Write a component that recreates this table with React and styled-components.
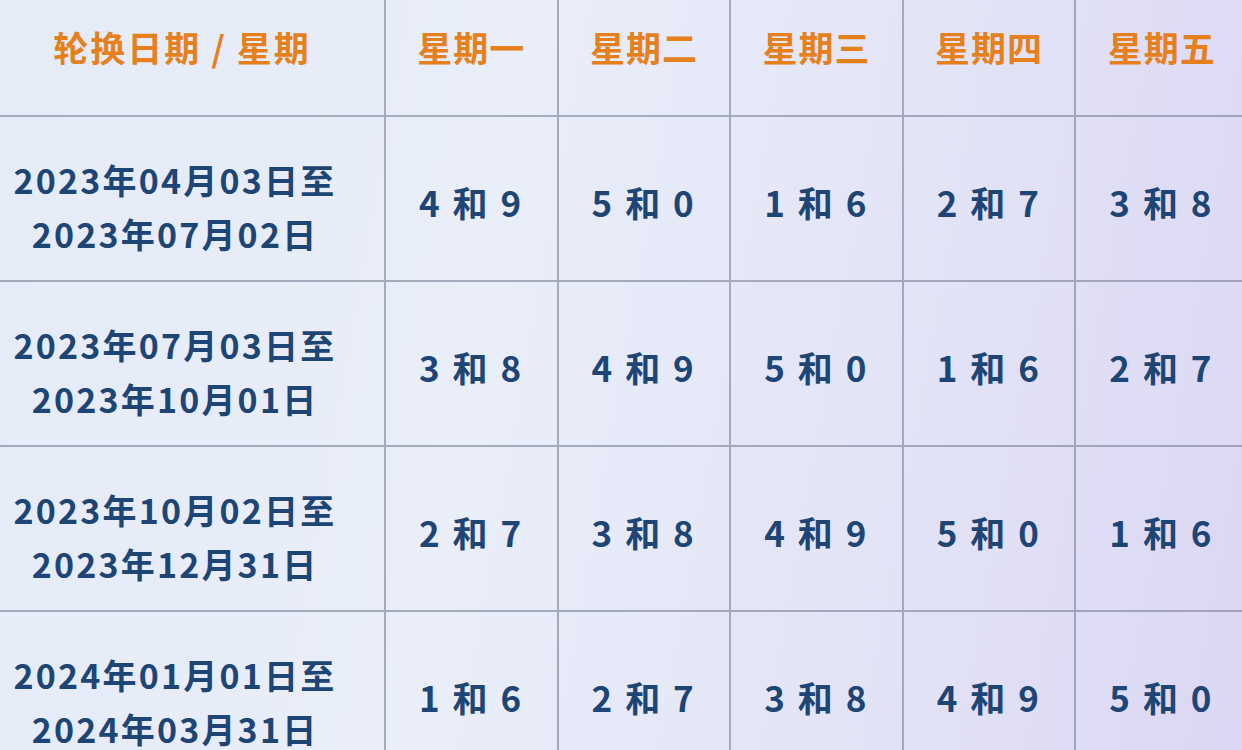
import React from "react";
import styled, { createGlobalStyle } from "styled-components";

const GlobalStyle = createGlobalStyle`
	html, body {
		margin: 0;
		padding: 0;
		overflow: hidden;
	}
	body {
		font-family: "Noto Sans CJK SC", "Noto Sans", sans-serif;
	}
`;

const Page = styled.div`
	width: 1242px;
	height: 750px;
	overflow: hidden;
	background: linear-gradient(100deg, #e5ebf7 0%, #e9eef9 40%, #e2e2f6 75%, #dcd7f4 100%);
`;

const Table = styled.div`
	display: grid;
	grid-template-columns: 386px repeat(5, 172.6px);
	grid-template-rows: 117px repeat(4, 165px);
	width: 1250px;
`;

const Cell = styled.div`
	display: flex;
	flex-direction: column;
	align-items: center;
	justify-content: ${(p) => (p.$head ? "flex-start" : "center")};
	padding-top: ${(p) => (p.$head ? "27px" : "0")};
	padding-right: ${(p) => (p.$first ? (p.$head ? "20px" : "34px") : "0")};
	box-sizing: border-box;
	border-right: 2px solid rgba(120, 126, 148, 0.6);
	border-bottom: 2px solid rgba(120, 126, 148, 0.6);
	font-weight: 700;
	color: ${(p) => (p.$head ? "#e5801c" : "#1d4575")};
	font-size: 35px;
	line-height: 40px;
	letter-spacing: ${(p) => (p.$first ? "2px" : "1px")};
	white-space: nowrap;
`;

const DateLine = styled.span`
	display: block;
	font-size: 34px;
	line-height: 54px;
	letter-spacing: 2.2px;
	position: relative;
	top: 8px;
`;

const Pair = styled.span`
	font-size: 35px;
	letter-spacing: 2.5px;
	margin-top: 6px;
`;

const heads = ["轮换日期 / 星期", "星期一", "星期二", "星期三", "星期四", "星期五"];

const rows = [
	{ from: "2023年04月03日至", to: "2023年07月02日", nums: ["4和9", "5和0", "1和6", "2和7", "3和8"] },
	{ from: "2023年07月03日至", to: "2023年10月01日", nums: ["3和8", "4和9", "5和0", "1和6", "2和7"] },
	{ from: "2023年10月02日至", to: "2023年12月31日", nums: ["2和7", "3和8", "4和9", "5和0", "1和6"] },
	{ from: "2024年01月01日至", to: "2024年03月31日", nums: ["1和6", "2和7", "3和8", "4和9", "5和0"] },
];

export default function App() {
	return (
		<Page>
			<GlobalStyle />
			<Table>
				{heads.map((h, i) => (
					<Cell $head $first={i === 0} key={h}>{h}</Cell>
				))}
				{rows.map((r) => (
					<React.Fragment key={r.from}>
						<Cell $first>
							<DateLine>{r.from}</DateLine>
							<DateLine>{r.to}</DateLine>
						</Cell>
						{r.nums.map((n, i) => (
							<Cell key={i}>
								<Pair>{n.split("").join(" ")}</Pair>
							</Cell>
						))}
					</React.Fragment>
				))}
			</Table>
		</Page>
	);
}
